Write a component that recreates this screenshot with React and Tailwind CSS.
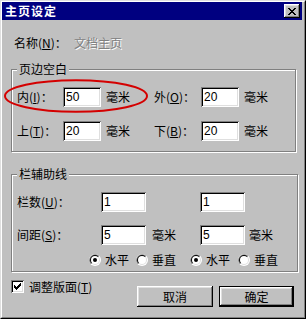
import React from 'react'

const raised = 'shadow-[inset_-1px_-1px_#000,inset_1px_1px_#fff,inset_-2px_-2px_#808080,inset_2px_2px_#dfdfdf]'
const sunken = 'shadow-[inset_1px_1px_#808080,inset_-1px_-1px_#fff,inset_2px_2px_#000,inset_-2px_-2px_#dfdfdf]'

function Acc({ k }) {
  return (
    <span>
      (<span className="underline underline-offset-1">{k}</span>)
    </span>
  )
}

function Field({ value, w }) {
  return (
    <div className={`flex h-[20px] shrink-0 items-center bg-white pl-[3px] font-['Liberation_Sans',sans-serif] text-[12px] ${sunken} ${w}`}>
      {value}
    </div>
  )
}

function Group({ title, className, children }) {
  return (
    <div className={`relative border border-[#808080] shadow-[inset_1px_1px_#fff,1px_1px_#fff] ${className}`}>
      <span className="absolute left-[5px] top-[-7px] bg-[#c0c0c0] px-[2px] leading-[12px]">{title}</span>
      {children}
    </div>
  )
}

function Radio({ checked, className = '' }) {
  return (
    <svg width="12" height="12" viewBox="0 0 12 12" className={`shrink-0 ${className}`}>
      <circle cx="6" cy="6" r="6" fill="#fff" />
      <path d="M10.24 1.76A6 6 0 0 0 1.76 10.24Z" fill="#808080" />
      <circle cx="6" cy="6" r="5" fill="#dfdfdf" />
      <path d="M9.54 2.46A5 5 0 0 0 2.46 9.54Z" fill="#000" />
      <circle cx="6" cy="6" r="4" fill="#fff" />
      {checked && <circle cx="6" cy="6" r="2" fill="#000" />}
    </svg>
  )
}

function Check() {
  const rows = [
    [6, 0, 1], [5, 1, 2], [0, 2, 1], [4, 2, 3], [0, 3, 2], [3, 3, 3], [0, 4, 5], [1, 5, 3], [2, 6, 1],
  ]
  return (
    <div className={`relative h-[13px] w-[13px] shrink-0 bg-white ${sunken}`}>
      <svg className="absolute left-[3px] top-[3px]" width="7" height="7" viewBox="0 0 7 7" shapeRendering="crispEdges">
        {rows.map(([x, y, w], i) => (
          <rect key={i} x={x} y={y} width={w} height="1" fill="#000" />
        ))}
      </svg>
    </div>
  )
}

function CloseX() {
  const rows = [
    [0, 0, 2], [6, 0, 2], [1, 1, 2], [5, 1, 2], [2, 2, 4], [3, 3, 2], [2, 4, 4], [1, 5, 2], [5, 5, 2], [0, 6, 2], [6, 6, 2],
  ]
  return (
    <svg width="8" height="7" viewBox="0 0 8 7" shapeRendering="crispEdges">
      {rows.map(([x, y, w], i) => (
        <rect key={i} x={x} y={y} width={w} height="1" fill="#000" />
      ))}
    </svg>
  )
}

export default function App() {
  return (
    <div className="relative h-[319px] w-[306px] border border-b-black border-l-[#dfdfdf] border-r-black border-t-[#dfdfdf] bg-[#c0c0c0] font-['Noto_Sans_CJK_SC',sans-serif] text-[12px] leading-[12px] text-black">
      <div className="flex h-full flex-col border border-b-[#808080] border-l-white border-r-[#808080] border-t-white pr-[2px]">
        {/* title bar */}
        <div className="flex h-[18px] shrink-0 items-center justify-between bg-[#000080] pl-[3px] pr-[2px]">
          <span className="font-bold tracking-[1px] text-white">主页设定</span>
          <div className={`flex h-[14px] w-[16px] items-center justify-center bg-[#c0c0c0] ${raised}`}>
            <CloseX />
          </div>
        </div>

        {/* name */}
        <div className="ml-[12px] mt-[17px] flex">
          <span className="w-[60px]">
            名称<Acc k="N" />：
          </span>
          <span className="text-[#808080] [text-shadow:1px_1px_0_#fff]">文档主页</span>
        </div>

        {/* margins */}
        <Group title="页边空白" className="ml-[9px] mt-[20px] h-[83px] w-[285px] shrink-0 pl-[5px] pt-[17px]">
          <div className="flex h-[20px] items-center">
            <span className="w-[46px]">
              内<Acc k="I" />：
            </span>
            <Field value="50" w="w-[38px]" />
            <span className="w-[53px] pl-[5px]">毫米</span>
            <span className="w-[47px]">
              外<Acc k="O" />：
            </span>
            <Field value="20" w="w-[38px]" />
            <span className="pl-[5px]">毫米</span>
          </div>
          <div className="mt-[14px] flex h-[20px] items-center">
            <span className="w-[46px]">
              上<Acc k="T" />：
            </span>
            <Field value="20" w="w-[38px]" />
            <span className="w-[53px] pl-[5px]">毫米</span>
            <span className="w-[47px]">
              下<Acc k="B" />：
            </span>
            <Field value="20" w="w-[38px]" />
            <span className="pl-[5px]">毫米</span>
          </div>
        </Group>

        {/* guides */}
        <Group title="栏辅助线" className="ml-[9px] mt-[22px] h-[98px] w-[287px] shrink-0 pl-[5px] pt-[17px]">
          <div className="flex h-[20px] items-center">
            <span className="w-[84px]">
              栏数<Acc k="U" />：
            </span>
            <Field value="1" w="w-[45px]" />
            <span className="w-[54px]" />
            <Field value="1" w="w-[45px]" />
          </div>
          <div className="mt-[13px] flex h-[20px] items-center">
            <span className="w-[84px]">
              间距<Acc k="S" />：
            </span>
            <Field value="5" w="w-[45px]" />
            <span className="w-[54px] pl-[6px]">毫米</span>
            <Field value="5" w="w-[45px]" />
            <span className="pl-[4px]">毫米</span>
          </div>
          <div className="mt-[9px] flex h-[12px] items-center">
            <Radio checked className="ml-[72px]" />
            <span className="ml-[4px]">水平</span>
            <Radio className="ml-[7px]" />
            <span className="ml-[4px]">垂直</span>
            <Radio checked className="ml-[14px]" />
            <span className="ml-[4px]">水平</span>
            <Radio className="ml-[8px]" />
            <span className="ml-[4px]">垂直</span>
          </div>
        </Group>

        {/* bottom */}
        <div className="ml-[9px] mr-[8px] mt-[8px] flex items-start">
          <Check />
          <span className="ml-[5px] mt-[1px]">
            调整版面<Acc k="T" />
          </span>
          <div className="ml-auto mt-[6px] flex gap-[6px]">
            <div className={`flex h-[21px] w-[76px] items-center justify-center ${raised}`}>取消</div>
            <div className="h-[21px] w-[75px] border border-black">
              <div className={`flex h-full w-full items-center justify-center ${raised}`}>确定</div>
            </div>
          </div>
        </div>
      </div>

      {/* red annotation */}
      <svg className="pointer-events-none absolute left-[2px] top-[77px]" width="148" height="37" viewBox="0 0 148 37">
        <ellipse cx="73" cy="18" rx="71" ry="15.8" fill="none" stroke="#d40000" strokeWidth="2" />
      </svg>
    </div>
  )
}
